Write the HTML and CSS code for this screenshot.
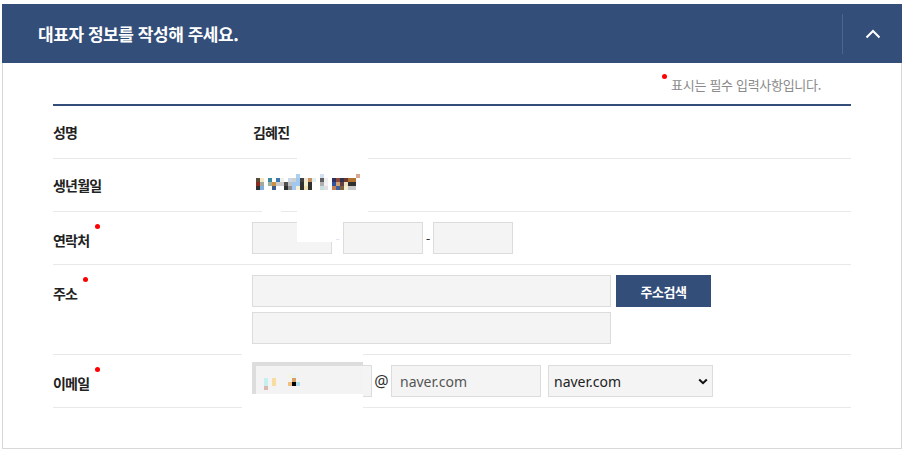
FILE: index.html
```html
<!DOCTYPE html>
<html lang="ko">
<head>
<meta charset="utf-8">
<title>대표자 정보</title>
<link rel="stylesheet" href="styles.css">
</head>
<body>
<section class="panel">
  <header class="panel-head">
    <h2 class="panel-title">대표자 정보를 작성해 주세요.</h2>
    <button class="toggle" type="button" aria-label="접기">
      <svg width="16" height="10" viewBox="0 0 16 10"><path d="M1.5 8.5 L8 2 L14.5 8.5" fill="none" stroke="#fff" stroke-width="2"/></svg>
    </button>
  </header>
  <div class="panel-body">
    <p class="req-note"><span class="req-dot"></span>표시는 필수 입력사항입니다.</p>
    <div class="form">
      <div class="row">
        <div class="label"><span>성명</span></div>
        <div class="field"><span class="value">김혜진</span></div>
      </div>
      <div class="row">
        <div class="label"><span>생년월일</span></div>
        <div class="field">
          <svg class="mosaic" width="110" height="32" viewBox="0 0 110 32">
            <g transform="translate(3,5)">
              <rect x="40" y="0" width="4" height="4" fill="#a8d0f0"/>
              <rect x="64" y="0" width="4" height="4" fill="#d0e0f0"/>
              <rect x="100" y="0" width="4" height="4" fill="#d8a890"/>
              <rect x="0" y="4" width="4" height="4" fill="#5a4a38"/>
              <rect x="4" y="4" width="4" height="4" fill="#f5e8c0"/>
              <rect x="12" y="4" width="4" height="4" fill="#3a8aa0"/>
              <rect x="20" y="4" width="4" height="4" fill="#3a78b0"/>
              <rect x="24" y="4" width="4" height="4" fill="#f0f0e8"/>
              <rect x="32" y="4" width="4" height="4" fill="#c8d8e8"/>
              <rect x="36" y="4" width="4" height="4" fill="#d0d0d0"/>
              <rect x="40" y="4" width="4" height="4" fill="#a0c8f0"/>
              <rect x="44" y="4" width="4" height="4" fill="#404040"/>
              <rect x="48" y="4" width="4" height="4" fill="#f0e8d0"/>
              <rect x="52" y="4" width="4" height="4" fill="#c89060"/>
              <rect x="56" y="4" width="4" height="4" fill="#e0f0f0"/>
              <rect x="64" y="4" width="4" height="4" fill="#606060"/>
              <rect x="68" y="4" width="4" height="4" fill="#f0f0f0"/>
              <rect x="76" y="4" width="4" height="4" fill="#303060"/>
              <rect x="80" y="4" width="4" height="4" fill="#904838"/>
              <rect x="84" y="4" width="4" height="4" fill="#303050"/>
              <rect x="88" y="4" width="4" height="4" fill="#703828"/>
              <rect x="92" y="4" width="8" height="4" fill="#b07030"/>
              <rect x="0" y="8" width="4" height="4" fill="#8a2a20"/>
              <rect x="4" y="8" width="4" height="4" fill="#a0a8a0"/>
              <rect x="12" y="8" width="4" height="4" fill="#a0b0a0"/>
              <rect x="16" y="8" width="4" height="4" fill="#c89040"/>
              <rect x="20" y="8" width="8" height="4" fill="#cccccc"/>
              <rect x="28" y="8" width="4" height="4" fill="#505050"/>
              <rect x="32" y="8" width="4" height="4" fill="#c0c0c0"/>
              <rect x="36" y="8" width="8" height="4" fill="#a0c8f0"/>
              <rect x="44" y="8" width="4" height="4" fill="#303030"/>
              <rect x="48" y="8" width="4" height="4" fill="#f0f0d0"/>
              <rect x="52" y="8" width="4" height="4" fill="#303030"/>
              <rect x="64" y="8" width="4" height="4" fill="#b0b0b0"/>
              <rect x="68" y="8" width="4" height="4" fill="#f0f0f0"/>
              <rect x="76" y="8" width="4" height="4" fill="#3050a0"/>
              <rect x="80" y="8" width="4" height="4" fill="#d0a070"/>
              <rect x="84" y="8" width="4" height="4" fill="#604040"/>
              <rect x="88" y="8" width="4" height="4" fill="#f0e0c0"/>
              <rect x="92" y="8" width="8" height="4" fill="#303030"/>
              <rect x="0" y="12" width="4" height="4" fill="#303030"/>
              <rect x="4" y="12" width="4" height="4" fill="#80b0e0"/>
              <rect x="16" y="12" width="4" height="4" fill="#3a5a90"/>
              <rect x="28" y="12" width="4" height="4" fill="#303030"/>
              <rect x="32" y="12" width="4" height="4" fill="#909090"/>
              <rect x="36" y="12" width="4" height="4" fill="#a0c8f0"/>
              <rect x="40" y="12" width="4" height="4" fill="#f8f0d0"/>
              <rect x="44" y="12" width="4" height="4" fill="#303030"/>
              <rect x="48" y="12" width="4" height="4" fill="#f0e0b0"/>
              <rect x="52" y="12" width="4" height="4" fill="#303030"/>
              <rect x="64" y="12" width="4" height="4" fill="#c8e0e0"/>
              <rect x="68" y="12" width="4" height="4" fill="#e0e0e0"/>
              <rect x="76" y="12" width="4" height="4" fill="#c08050"/>
              <rect x="80" y="12" width="4" height="4" fill="#4060a0"/>
              <rect x="84" y="12" width="4" height="4" fill="#806040"/>
              <rect x="88" y="12" width="4" height="4" fill="#f0f0d0"/>
              <rect x="92" y="12" width="8" height="4" fill="#c8c8c8"/>
            </g>
          </svg>
        </div>
      </div>
      <div class="row">
        <div class="label"><span class="req">연락처</span></div>
        <div class="field inputs">
          <input class="input phone" type="text">
          <span class="dash faint">-</span>
          <input class="input phone" type="text">
          <span class="dash short">-</span>
          <input class="input phone" type="text">
        </div>
      </div>
      <div class="row">
        <div class="label"><span class="req">주소</span></div>
        <div class="field inputs stack">
          <div class="line">
            <input class="input addr" type="text">
            <button class="btn" type="button">주소검색</button>
          </div>
          <div class="line">
            <input class="input addr" type="text">
          </div>
        </div>
      </div>
      <div class="row">
        <div class="label"><span class="req">이메일</span></div>
        <div class="field inputs">
          <input class="input mail-id" type="text">
          <span class="at">@</span>
          <input class="input mail-domain" type="text" value="naver.com">
          <div class="select-wrap">
            <select class="select">
              <option>naver.com</option>
            </select>
            <svg class="select-arrow" width="10" height="7" viewBox="0 0 10 7"><path d="M1.2 1.5 L5 5.2 L8.8 1.5" fill="none" stroke="#111" stroke-width="2"/></svg>
          </div>
        </div>
      </div>
    </div>

    <div class="redact redact-a"></div>
    <div class="redact redact-b"></div>
    <div class="redact redact-c"></div>
    <svg class="redact-mail" width="121" height="58" viewBox="0 0 121 58">
      <rect x="0" y="0" width="121" height="58" fill="#fff"/>
      <rect x="10" y="10" width="111" height="32" fill="#dddddd"/>
      <rect x="14" y="14" width="107" height="28" fill="#f3f3f3"/>
      <g transform="translate(10,10)">
        <rect x="12" y="16" width="4" height="8" fill="#c4f0f0"/>
        <rect x="12" y="24" width="4" height="4" fill="#d8b8b0"/>
        <rect x="20" y="16" width="4" height="8" fill="#f8dca0"/>
        <rect x="36" y="12" width="4" height="4" fill="#f4f4e0"/>
        <rect x="40" y="12" width="4" height="4" fill="#e8f4f4"/>
        <rect x="40" y="16" width="4" height="4" fill="#d8a060"/>
        <rect x="36" y="20" width="4" height="4" fill="#f0c080"/>
        <rect x="40" y="20" width="4" height="4" fill="#000"/>
        <rect x="44" y="20" width="4" height="4" fill="#b0e0f0"/>
      </g>
    </svg>
  </div>
</section>
</body>
</html>
```

FILE: styles.css
```css
* { box-sizing: border-box; }

body {
  margin: 0;
  background: #fff;
  font-family: "Noto Sans CJK KR", "Noto Sans", sans-serif;
  color: #222;
}

.panel {
  width: 900px;
  margin: 4px 0 0 2px;
}

.panel-head {
  height: 59px;
  background: #344e7a;
  display: flex;
  align-items: center;
  justify-content: space-between;
}

.panel-title {
  margin: 0 0 0 36px;
  color: #fff;
  font-size: 17px;
  font-weight: 700;
  letter-spacing: -0.45px;
  line-height: 24px;
}

.toggle {
  width: 60px;
  height: 40px;
  padding: 0;
  margin: 0;
  border: 0;
  border-left: 1px solid rgba(255, 255, 255, 0.13);
  background: transparent;
  display: flex;
  align-items: center;
  justify-content: center;
  cursor: pointer;
}

.panel-body {
  position: relative;
  border: 1px solid #d8d8d8;
  border-top: 0;
  padding: 0 50px 40px;
}

.req-note {
  margin: 0;
  padding: 12px 30px 9px 0;
  text-align: right;
  font-size: 13px;
  line-height: 20px;
  letter-spacing: -0.3px;
  color: #8a8a8a;
}

.req-dot {
  display: inline-block;
  width: 5px;
  height: 5px;
  border-radius: 50%;
  background: #f00;
  vertical-align: top;
  margin: -1px 4px 0 0;
}

.form {
  border-top: 2px solid #344e7a;
}

.row {
  display: flex;
  padding: 10px 0;
  border-bottom: 1px solid #e9e9e9;
}

.label {
  width: 200px;
  height: 32px;
  flex: none;
  font-size: 14px;
  font-weight: 700;
  line-height: 32px;
  letter-spacing: -0.8px;
  color: #222;
}

.label span {
  position: relative;
  display: inline-block;
}

.label .req {
  top: 2px;
}

.label .req::after {
  content: "";
  position: absolute;
  right: -11px;
  top: 0;
  width: 5px;
  height: 5px;
  border-radius: 50%;
  background: #f00;
}

.field {
  flex: 1;
  display: flex;
  align-items: center;
  min-height: 32px;
}

.field.inputs {
  margin-left: -1px;
}

.field.stack {
  flex-direction: column;
  align-items: flex-start;
  gap: 5px;
}

.line {
  display: flex;
}

.value {
  font-size: 14px;
  font-weight: 700;
  letter-spacing: -0.8px;
  line-height: 32px;
}

.mosaic {
  display: block;
  position: relative;
  z-index: 1;
}

.input {
  height: 32px;
  margin: 0;
  border: 1px solid #dcdcdc;
  background: #f4f4f4;
  padding: 0 8px;
  font-family: "Noto Sans", sans-serif;
  font-size: 14px;
  color: #555;
  border-radius: 0;
  outline: none;
}

.phone { width: 80px; }

.dash {
  width: 11px;
  text-align: center;
  font-family: "Noto Sans", sans-serif;
  font-size: 13px;
  color: #333;
}

.dash.short { width: 10px; }

.dash.faint { color: #e2e2f0; }

.addr { width: 359px; }

.btn {
  width: 95px;
  height: 32px;
  margin: 0 0 0 5px;
  border: 0;
  background: #344e7a;
  color: #fff;
  font-family: "Noto Sans CJK KR", sans-serif;
  font-size: 13px;
  font-weight: 700;
  letter-spacing: -0.5px;
  cursor: pointer;
}

.mail-id { width: 120px; }

.at {
  width: 19px;
  text-align: center;
  font-family: "Noto Sans", sans-serif;
  font-size: 16px;
  color: #333;
}

.mail-domain { width: 150px; }

.select-wrap {
  position: relative;
  margin-left: 7px;
}

.select {
  display: block;
  width: 165px;
  height: 32px;
  margin: 0;
  border: 1px solid #dcdcdc;
  background: #f4f4f4;
  padding: 0 20px 0 5px;
  font-family: "Noto Sans", sans-serif;
  font-size: 14px;
  color: #222;
  appearance: none;
  -webkit-appearance: none;
  border-radius: 0;
  outline: none;
}

.select-arrow {
  position: absolute;
  right: 5px;
  top: 13px;
  pointer-events: none;
}

.redact {
  position: absolute;
  background: #fff;
}

.redact-a { left: 294px; top: 93px; width: 71px; height: 66px; }
.redact-b { left: 294px; top: 159px; width: 36px; height: 20px; }
.redact-c { left: 259px; top: 146px; width: 19px; height: 4px; }

.redact-mail {
  position: absolute;
  left: 239px;
  top: 289px;
  display: block;
}
```
